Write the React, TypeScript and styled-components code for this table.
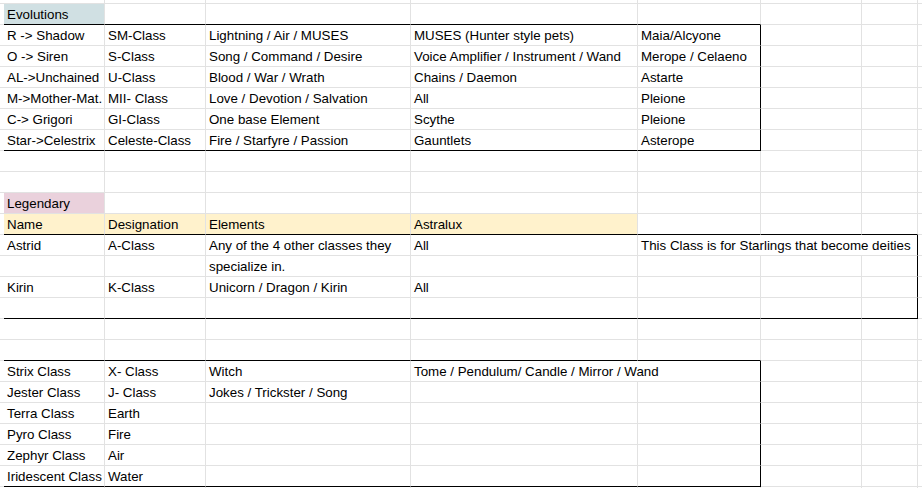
import React from 'react';
import styled, { createGlobalStyle } from 'styled-components';

const GlobalStyle = createGlobalStyle`
  html, body {
    margin: 0;
    padding: 0;
    background: #fff;
  }
  body {
    font-family: 'Liberation Sans', Arial, sans-serif;
    color: #000;
  }
`;

const GRID = '#e2e2e2';
const INK = '#000';
const BLUE = '#d0e0e3';
const PINK = '#ead1dc';
const YELLOW = '#fff2cc';

const COL_WIDTHS = [4, 101, 101, 205, 227, 123, 101, 56];
const COL_COUNT = COL_WIDTHS.length + 1;

type Frame = { r1: number; r2: number; c1: number; c2: number };

// black outlines round each table block
const FRAMES: Frame[] = [
  { r1: 2, r2: 7, c1: 1, c2: 5 },
  { r1: 12, r2: 15, c1: 1, c2: 7 },
  { r1: 18, r2: 23, c1: 1, c2: 5 },
];

type CellSpec = { text?: string; span?: number; fill?: string };
type CellInput = string | CellSpec;

const StyledSheet = styled.div`
  width: 922px;
  height: 488px;
  overflow: hidden;
  display: flex;
  flex-direction: column;
`;

const StyledRow = styled.div<{ $height: number }>`
  display: grid;
  grid-template-columns: ${COL_WIDTHS.map((w) => `${w}px`).join(' ')} 1fr;
  height: ${(p) => p.$height}px;
  flex: none;
`;

const StyledCell = styled.div<{
  $span: number;
  $fill?: string;
  $rightInk: boolean;
  $bottomInk: boolean;
}>`
  grid-column: span ${(p) => p.$span};
  box-sizing: border-box;
  display: flex;
  align-items: flex-end;
  padding: 0 3px 1px;
  background: ${(p) => p.$fill || '#fff'};
  border-right: 1px solid ${(p) => (p.$rightInk ? INK : GRID)};
  border-bottom: 1px solid ${(p) => (p.$bottomInk ? INK : GRID)};
  font-size: 13.33px;
  line-height: 16px;
  white-space: nowrap;
  overflow: hidden;
`;

const ROWS: { height: number; cells: CellInput[] }[] = [
  { height: 4, cells: [] },
  { height: 21, cells: [{ text: 'Evolutions', fill: BLUE }] },
  { height: 21, cells: ['R -> Shadow', 'SM-Class', 'Lightning / Air / MUSES', 'MUSES (Hunter style pets)', 'Maia/Alcyone'] },
  { height: 21, cells: ['O -> Siren', 'S-Class', 'Song / Command / Desire', 'Voice Amplifier / Instrument / Wand', 'Merope / Celaeno'] },
  { height: 21, cells: ['AL->Unchained', 'U-Class', 'Blood / War / Wrath', 'Chains / Daemon', 'Astarte'] },
  { height: 21, cells: ['M->Mother-Mat.', 'MII- Class', 'Love / Devotion / Salvation', 'All', 'Pleione'] },
  { height: 21, cells: ['C-> Grigori', 'GI-Class', 'One base Element', 'Scythe', 'Pleione'] },
  { height: 21, cells: ['Star->Celestrix', 'Celeste-Class', 'Fire / Starfyre / Passion', 'Gauntlets', 'Asterope'] },
  { height: 21, cells: [] },
  { height: 21, cells: [] },
  { height: 21, cells: [{ text: 'Legendary', fill: PINK }] },
  {
    height: 21,
    cells: [
      { text: 'Name', fill: YELLOW },
      { text: 'Designation', fill: YELLOW },
      { text: 'Elements', fill: YELLOW },
      { text: 'Astralux', fill: YELLOW },
    ],
  },
  {
    height: 21,
    cells: [
      'Astrid',
      'A-Class',
      'Any of the 4 other classes they',
      'All',
      { text: 'This Class is for Starlings that become deities', span: 3 },
    ],
  },
  { height: 21, cells: ['', '', 'specialize in.'] },
  { height: 21, cells: ['Kirin', 'K-Class', 'Unicorn / Dragon / Kirin', 'All'] },
  { height: 21, cells: [] },
  { height: 21, cells: [] },
  { height: 21, cells: [] },
  {
    height: 21,
    cells: ['Strix Class', 'X- Class', 'Witch', { text: 'Tome / Pendulum/ Candle / Mirror / Wand', span: 2 }],
  },
  { height: 21, cells: ['Jester Class', 'J- Class', 'Jokes / Trickster / Song'] },
  { height: 21, cells: ['Terra Class', 'Earth'] },
  { height: 21, cells: ['Pyro Class', 'Fire'] },
  { height: 21, cells: ['Zephyr Class', 'Air'] },
  { height: 21, cells: ['Iridescent Class', 'Water'] },
  { height: 21, cells: [] },
];

const inRange = (v: number, a: number, b: number) => v >= a && v <= b;

const rightIsInk = (r: number, cEnd: number) =>
  FRAMES.some((f) => inRange(r, f.r1, f.r2) && (cEnd === f.c2 || cEnd + 1 === f.c1));

const bottomIsInk = (r: number, c1: number, c2: number) =>
  FRAMES.some(
    (f) => (r === f.r2 || r + 1 === f.r1) && c1 <= f.c2 && c2 >= f.c1,
  );

const buildCells = (inputs: CellInput[]) => {
  const specs: CellSpec[] = [{}];
  inputs.forEach((c) => specs.push(typeof c === 'string' ? { text: c } : c));
  let used = specs.reduce((n, s) => n + (s.span || 1), 0);
  while (used < COL_COUNT) {
    specs.push({});
    used += 1;
  }
  return specs;
};

const App: React.FC = () => (
  <>
    <GlobalStyle />
    <StyledSheet>
      {ROWS.map((row, r) => {
        let col = 0;
        return (
          <StyledRow key={r} $height={row.height}>
            {buildCells(row.cells).map((cell, i) => {
              const span = cell.span || 1;
              const start = col;
              const end = col + span - 1;
              col += span;
              return (
                <StyledCell
                  key={i}
                  $span={span}
                  $fill={cell.fill}
                  $rightInk={rightIsInk(r, end)}
                  $bottomInk={bottomIsInk(r, start, end)}
                >
                  {cell.text}
                </StyledCell>
              );
            })}
          </StyledRow>
        );
      })}
    </StyledSheet>
  </>
);

export default App;
